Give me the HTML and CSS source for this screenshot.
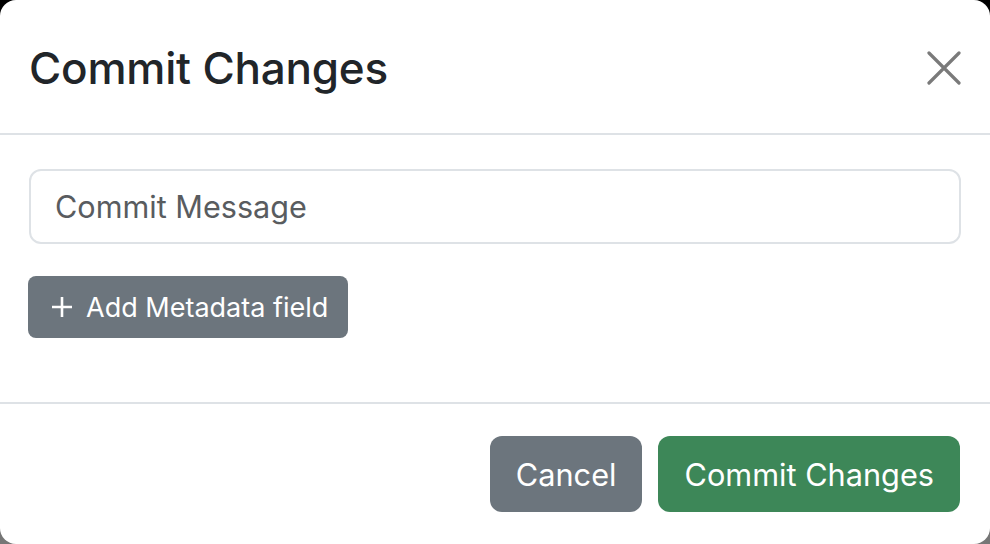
FILE: index.html
```html
<!DOCTYPE html>
<html lang="en">
<head>
<meta charset="utf-8">
<title>Commit Changes</title>
<link rel="stylesheet" href="styles.css">
</head>
<body>
<div class="modal">
  <div class="modal-header">
    <h5 class="modal-title">Commit Changes</h5>
    <button class="btn-close" aria-label="Close">
      <svg width="34" height="34" viewBox="0 0 34 34"><path d="M2 2 L32 32 M32 2 L2 32" stroke="#7a7a7a" stroke-width="3.2" stroke-linecap="round" fill="none"/></svg>
    </button>
  </div>
  <div class="modal-body">
    <input class="form-control" type="text" placeholder="Commit Message">
    <div class="meta-row">
      <button class="btn btn-secondary btn-sm">
        <svg class="plus" width="22" height="22" viewBox="0 0 22 22"><path d="M11 1 V21 M1 11 H21" stroke="#fff" stroke-width="2.6" fill="none"/></svg>
        <span>Add Metadata field</span>
      </button>
    </div>
  </div>
  <div class="modal-footer">
    <button class="btn btn-secondary">Cancel</button>
    <button class="btn btn-success">Commit Changes</button>
  </div>
</div>
</body>
</html>
```

FILE: styles.css
```css
html, body {
  margin: 0;
  height: 100%;
}
body {
  background: linear-gradient(#000 0%, #444 60%, #777 100%);
  font-family: "Inter", "Liberation Sans", sans-serif;
  color: #212529;
  overflow: hidden;
}
.modal {
  height: 544px;
  background: #fff;
  border-radius: 16px;
  display: flex;
  flex-direction: column;
  box-sizing: border-box;
}
.modal-header {
  height: 135px;
  box-sizing: border-box;
  border-bottom: 2px solid #dee2e6;
  display: flex;
  align-items: center;
  justify-content: space-between;
  padding: 0 29px 0 29px;
}
.modal-title {
  margin: 0;
  font-size: 44px;
  font-weight: 500;
  line-height: 1;
  position: relative;
  top: 1px;
  letter-spacing: -0.2px;
}
.btn-close {
  background: none;
  border: 0;
  padding: 0;
  width: 34px;
  height: 34px;
  display: flex;
  margin-top: 2px;
}
.modal-body {
  padding: 34px 29px 0 29px;
  height: 269px;
  box-sizing: border-box;
  border-bottom: 2px solid #dee2e6;
}
.form-control {
  display: block;
  width: 100%;
  box-sizing: border-box;
  height: 75px;
  border: 2px solid #dee2e6;
  border-radius: 12px;
  padding: 0 24px;
  font-family: inherit;
  font-size: 30.6px;
  color: #212529;
  outline: none;
}
.form-control::placeholder {
  color: #595c5f;
}
.meta-row {
  margin-top: 32px;
  display: flex;
}
.btn {
  border: 0;
  color: #fff;
  font-family: inherit;
  display: inline-flex;
  align-items: center;
  justify-content: center;
}
.btn-secondary {
  background: #6c757d;
}
.btn-success {
  background: #3d8758;
}
.btn-sm {
  height: 62px;
  border-radius: 8px;
  padding: 0 20px 0 23px;
  font-size: 27px;
  gap: 13px;
  margin-left: -1px;
}
.plus {
  flex: none;
}
.modal-footer {
  flex: 1;
  display: flex;
  justify-content: flex-end;
  align-items: flex-start;
  padding: 32px 30px 0 0;
  gap: 16px;
}
.modal-footer .btn {
  height: 76px;
  border-radius: 12px;
  font-size: 30.7px;
  padding: 0 26px;
}
```
